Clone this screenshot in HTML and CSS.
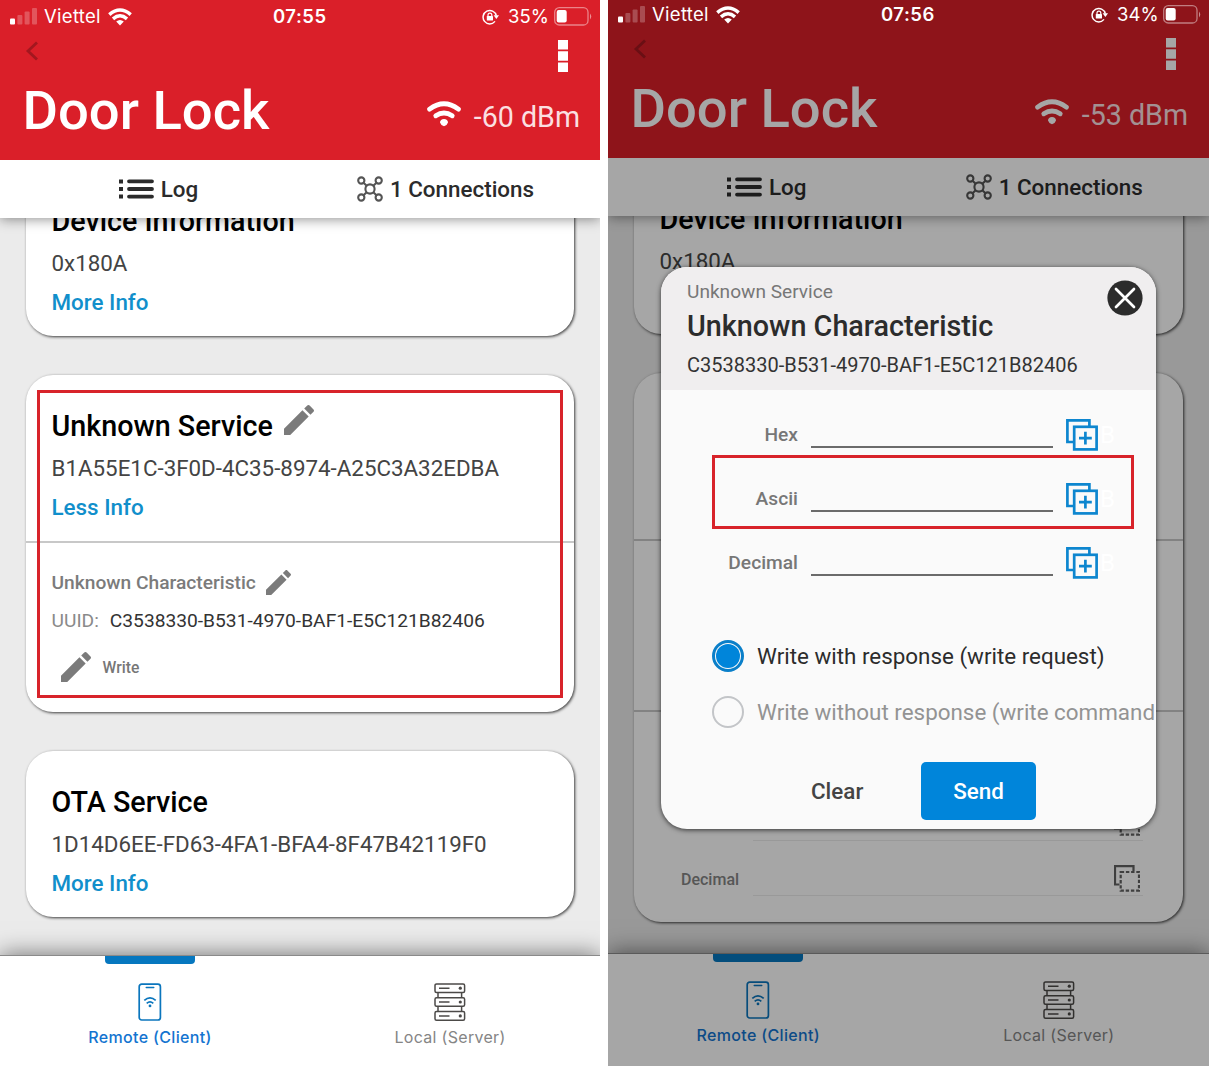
FILE: index.html
```html
<!DOCTYPE html>
<html lang="en">
<head>
<meta charset="utf-8">
<title>Door Lock</title>
<link rel="stylesheet" href="styles.css">
</head>
<body>
<svg class="sprite" aria-hidden="true">
  <symbol id="signal" viewBox="0 0 27 17">
    <rect x="0" y="10.5" width="5" height="6" rx="1" fill="#fff"/>
    <g fill="#fff" opacity=".24"><rect x="7.4" y="7" width="5" height="9.5" rx="1"/><rect x="14.6" y="3.5" width="5" height="13" rx="1"/><rect x="22" y="0" width="5" height="16.5" rx="1"/></g>
  </symbol>
  <symbol id="wifi-status" viewBox="0 0 24 18">
    <g fill="none" stroke="#fff" stroke-width="3.500"><path d="M1.300 6.600Q12-2.600 22.700 6.600"/><path d="M5 10.800Q12 4.800 19 10.800"/></g>
    <path d="M8.200 13.600Q12 10.600 15.800 13.600L12 17.600Z" fill="#fff"/>
  </symbol>
  <symbol id="wifi" viewBox="0 0 34 26">
    <g fill="none" stroke="currentColor" stroke-width="4.800" stroke-linecap="round"><path d="M2.600 8.200Q17-2.600 31.400 8.200"/><path d="M8.800 14.800Q17 9.200 25.200 14.800"/></g>
    <path d="M17 18a4 3.400 0 0 1 4 3.600Q20.500 24 17 25.300Q13.500 24 13 21.600A4 3.400 0 0 1 17 18Z" fill="currentColor"/>
  </symbol>
  <symbol id="rotation" viewBox="0 0 17 16">
    <path d="M14.300 6.600A6.700 6.700 0 1 0 13 12.400" fill="none" stroke="#fff" stroke-width="1.500"/>
    <path d="M11.600 6.200h5.400l-2.600 3.800z" fill="#fff"/>
    <rect x="4.800" y="7" width="6.200" height="4.600" rx=".6" fill="#fff"/>
    <path d="M6 7.200V6a1.900 1.900 0 0 1 3.800 0v1.200" fill="none" stroke="#fff" stroke-width="1.200"/>
  </symbol>
  <symbol id="battery" viewBox="0 0 38 19">
    <rect x=".7" y=".7" width="33.300" height="17.300" rx="4.600" fill="none" stroke="#fff" stroke-opacity=".45" stroke-width="1.300"/>
    <rect x="2.700" y="3" width="10" height="12.600" rx="2" fill="#fff"/>
    <path d="M36 6.500q2.400 3 0 6z" fill="#fff" fill-opacity=".5"/>
  </symbol>
  <symbol id="back" viewBox="0 0 14 22"><path d="M12 2.500L3 11l9 8.500" fill="none" stroke="currentColor" stroke-width="2.800"/></symbol>
  <symbol id="more" viewBox="0 0 10 32"><path d="M0 0h10v9.600H0zM0 11.300h10v9.400H0zM0 22.400h10V32H0z" fill="currentColor"/></symbol>
  <symbol id="log" viewBox="0 0 35 20">
    <path d="M0 .5h4v4H0zM0 8h4v4H0zM0 15.500h4v4H0z" fill="#2b2b2b"/>
    <path d="M10 2.300h23M10 10h23M10 17.600h23" stroke="#2b2b2b" stroke-width="3.800" stroke-linecap="round"/>
  </symbol>
  <symbol id="connections" viewBox="0 0 26 26">
    <g fill="none" stroke="#555" stroke-width="2.100"><circle cx="13" cy="13" r="4.600"/><circle cx="4.300" cy="4.500" r="3.100"/><circle cx="21.700" cy="4.500" r="3.100"/><circle cx="4.300" cy="21.500" r="3.100"/><circle cx="21.700" cy="21.500" r="3.100"/><path d="M6.500 6.700l3.200 3.100M19.500 6.700l-3.200 3.100M6.500 19.300l3.200-3.100M19.500 19.300l-3.200-3.100"/></g>
  </symbol>
  <symbol id="pencil" viewBox="3 3 18 18"><path fill="#7b7b7b" d="M3 17.250V21h3.750L17.810 9.940l-3.750-3.750L3 17.250zM20.710 7.040c.39-.39.39-1.020 0-1.410l-2.340-2.340c-.39-.39-1.020-.39-1.410 0l-1.830 1.830 3.750 3.750 1.830-1.830z"/></symbol>
  <symbol id="phone-icon" viewBox="0 0 24 38">
    <rect x="1.200" y="1.200" width="21.200" height="35.800" rx="2.500" fill="none" stroke="#0b76bd" stroke-width="1.700"/>
    <path d="M8.200 4.500h7.600" stroke="#0b76bd" stroke-width="1.400" stroke-linecap="round"/>
    <path d="M6.300 17.400Q12 12.400 17.700 17.400M8.700 20.300Q12 17.300 15.300 20.300" fill="none" stroke="#0b76bd" stroke-width="1.700"/>
    <circle cx="12" cy="22.900" r="1.400" fill="#0b76bd"/>
  </symbol>
  <symbol id="server" viewBox="0 0 32 38">
    <g fill="none" stroke="#4c4a48" stroke-width="1.500"><rect x="1" y=".9" width="29.600" height="8.600" rx="1.500"/><rect x="1" y="14.700" width="29.600" height="8.600" rx="1.500"/><rect x="1" y="28.600" width="29.600" height="8.600" rx="1.500"/><path d="M4 9.500v5.200M27.600 9.500v5.200M4 23.300v5.300M27.600 23.300v5.300M5 5.300h10.500M5 19.100h10.500M5 33h10.500"/></g>
    <g fill="#4c4a48"><circle cx="26.300" cy="5.200" r="1.600"/><circle cx="26.300" cy="19" r="1.600"/><circle cx="26.300" cy="32.900" r="1.600"/></g>
  </symbol>
  <symbol id="copy-add" viewBox="0 0 32 32">
    <g fill="none" stroke="#0d86cf" stroke-width="2.700"><path d="M7 23H1.400V1.300h22V7"/><rect x="8.200" y="7.800" width="22.400" height="22.600"/><path d="M19.400 12.700v12.800M13 19.100h12.800"/></g>
  </symbol>
  <symbol id="copy-dashed" viewBox="0 0 26 27">
    <g fill="none" stroke="#616161" stroke-width="2.200"><path d="M5.500 19.500H1V1.100h18.500V6"/><rect x="6.700" y="7" width="18.300" height="18.600" stroke-dasharray="3.400 1.800"/></g>
  </symbol>
  <symbol id="close" viewBox="0 0 36 36"><circle cx="18" cy="18" r="17.600" fill="#2c2c2c"/><path d="M9 9l18 18M27 9L9 27" stroke="#fff" stroke-width="2.700" stroke-linecap="round"/></symbol>
</svg>

<main class="board">
  <section class="phone">
    <div class="status">
      <svg class="i-signal"><use href="#signal"/></svg><span class="carrier">Viettel</span><svg class="i-wifi-status"><use href="#wifi-status"/></svg>
      <span class="clock">07:55</span>
      <span class="power"><svg class="i-rotation"><use href="#rotation"/></svg><span class="percent">35%</span><svg class="i-battery"><use href="#battery"/></svg></span>
    </div>
    <header class="header">
      <div class="nav-row"><svg class="i-back"><use href="#back"/></svg><svg class="i-more"><use href="#more"/></svg></div>
      <div class="title-row"><h1 class="device">Door Lock</h1><div class="rssi"><svg class="i-wifi"><use href="#wifi"/></svg><span>-60 dBm</span></div></div>
    </header>
    <nav class="tabs">
      <div class="tab"><svg class="i-log"><use href="#log"/></svg><span class="tab-log">Log</span></div>
      <div class="tab"><svg class="i-connections"><use href="#connections"/></svg><span class="tab-connections">1 Connections</span></div>
    </nav>
    <div class="content">
      <article class="card card-first"><div class="service">
        <h2 class="name">Device Information</h2><p class="uuid">0x180A</p><p class="link">More Info</p>
      </div></article>
      <article class="card">
        <div class="service">
          <h2 class="name name-unknown">Unknown Service<svg class="i-pencil pencil-title"><use href="#pencil"/></svg></h2>
          <p class="uuid">B1A55E1C-3F0D-4C35-8974-A25C3A32EDBA</p><p class="link">Less Info</p>
        </div>
        <div class="characteristic">
          <div class="char-name">Unknown Characteristic<svg class="i-pencil pencil-small"><use href="#pencil"/></svg></div>
          <div class="char-uuid"><span class="muted">UUID:</span><span>C3538330-B531-4970-BAF1-E5C121B82406</span></div>
          <div class="write"><svg class="i-pencil"><use href="#pencil"/></svg><span>Write</span></div>
        </div>
      </article>
      <article class="card"><div class="service">
        <h2 class="name">OTA Service</h2><p class="uuid">1D14D6EE-FD63-4FA1-BFA4-8F47B42119F0</p><p class="link">More Info</p>
      </div></article>
    </div>
    <footer class="bottom">
      <div class="dest active"><svg class="i-phone"><use href="#phone-icon"/></svg><span>Remote (Client)</span></div>
      <div class="dest"><svg class="i-server"><use href="#server"/></svg><span>Local (Server)</span></div>
    </footer>
    <div class="mark mark-service"></div>
  </section>

  <section class="phone phone-modal">
    <div class="status">
      <svg class="i-signal"><use href="#signal"/></svg><span class="carrier">Viettel</span><svg class="i-wifi-status"><use href="#wifi-status"/></svg>
      <span class="clock">07:56</span>
      <span class="power"><svg class="i-rotation"><use href="#rotation"/></svg><span class="percent">34%</span><svg class="i-battery"><use href="#battery"/></svg></span>
    </div>
    <header class="header">
      <div class="nav-row"><svg class="i-back"><use href="#back"/></svg><svg class="i-more"><use href="#more"/></svg></div>
      <div class="title-row"><h1 class="device">Door Lock</h1><div class="rssi"><svg class="i-wifi"><use href="#wifi"/></svg><span>-53 dBm</span></div></div>
    </header>
    <nav class="tabs">
      <div class="tab"><svg class="i-log"><use href="#log"/></svg><span class="tab-log">Log</span></div>
      <div class="tab"><svg class="i-connections"><use href="#connections"/></svg><span class="tab-connections">1 Connections</span></div>
    </nav>
    <div class="content">
      <article class="card card-first"><div class="service">
        <h2 class="name">Device Information</h2><p class="uuid">0x180A</p>
      </div></article>
      <article class="card">
        <div class="service"></div>
        <div class="characteristic"></div>
        <div class="values">
          <div class="value"><span class="value-label"></span><span class="value-field field-ascii"><svg class="i-dashed"><use href="#copy-dashed"/></svg></span></div>
          <div class="value"><span class="value-label">Decimal</span><span class="value-field"><svg class="i-dashed"><use href="#copy-dashed"/></svg></span></div>
        </div>
      </article>
    </div>
    <footer class="bottom">
      <div class="dest active"><svg class="i-phone"><use href="#phone-icon"/></svg><span>Remote (Client)</span></div>
      <div class="dest"><svg class="i-server"><use href="#server"/></svg><span>Local (Server)</span></div>
    </footer>
    <div class="scrim"></div>
    <div class="dialog">
      <div class="dialog-head">
        <p class="dialog-service">Unknown Service</p>
        <h2 class="dialog-title">Unknown Characteristic</h2>
        <p class="dialog-uuid">C3538330-B531-4970-BAF1-E5C121B82406</p>
        <svg class="i-close"><use href="#close"/></svg>
      </div>
      <div class="fields">
        <div class="field"><label>Hex</label><span class="line"></span><svg class="i-copy"><use href="#copy-add"/></svg><span class="ghost">B</span></div>
        <div class="field"><label>Ascii</label><span class="line"></span><svg class="i-copy"><use href="#copy-add"/></svg><span class="ghost">B</span></div>
        <div class="field"><label>Decimal</label><span class="line"></span><svg class="i-copy"><use href="#copy-add"/></svg><span class="ghost">B</span></div>
      </div>
      <div class="options">
        <div class="option"><span class="radio checked"></span><span>Write with response (write request)</span></div>
        <div class="option off"><span class="radio"></span><span>Write without response (write command</span></div>
      </div>
      <div class="actions"><span class="clear">Clear</span><span class="send">Send</span></div>
    </div>
    <div class="mark mark-ascii"></div>
  </section>
</main>
</body>
</html>
```

FILE: styles.css
```css
* { box-sizing: border-box; margin: 0; padding: 0; }
body { width: 1215px; height: 1071px; overflow: hidden; background: #fff; font-family: Roboto, "Liberation Sans", sans-serif; white-space: nowrap; }
svg { display: block; flex: none; }
.sprite { position: absolute; width: 0; height: 0; }
h1, h2 { font-weight: 500; }

.board { display: flex; gap: 8px; height: 1071px; overflow: hidden; }
.phone { position: relative; flex: none; width: 600px; height: 1066px; display: flex; flex-direction: column; background: #fff; overflow: hidden; }
.phone-modal { width: 601px; height: 1068px; margin-top: -2px; }

.status { position: relative; z-index: 3; flex: none; height: 33px; margin-bottom: -33px; padding: 0 8px 0 10px; display: flex; align-items: center; color: #fff; font-family: Inter, "Liberation Sans", sans-serif; font-size: 18.500px; line-height: 33px; }
.i-signal { width: 27px; height: 17px; margin: -1px 7px 0 0; }
.carrier { width: 58px; letter-spacing: .3px; }
.i-wifi-status { width: 24px; height: 18px; margin-left: 6px; }
.clock { margin-left: 141px; font-weight: 600; letter-spacing: .5px; }
.power { margin-left: auto; display: flex; align-items: center; }
.i-rotation { width: 17px; height: 16px; margin-right: 9px; }
.percent { width: 41px; margin-right: 5px; }
.i-battery { width: 38px; height: 19px; margin-top: -1px; }

.header { position: relative; z-index: 2; flex: none; height: 160px; background: #da1f29; color: #fff; padding: 40px 20px 0 24px; }
.phone-modal .header { padding-right: 21px; }
.nav-row { display: flex; justify-content: space-between; height: 34px; }
.i-back { width: 14px; height: 22px; margin-left: 1px; color: #a3171f; }
.i-more { width: 10px; height: 32px; margin-right: 12px; }
.title-row { display: flex; justify-content: space-between; height: 74px; align-items: center; }
.device { font-size: 54.400px; line-height: 74px; margin-left: -1.500px; }
.rssi { display: flex; align-items: center; gap: 13px; font-size: 28.600px; color: #fbdfe1; padding-top: 11px; }
.i-wifi { width: 34px; height: 26px; color: #fff; margin-top: -6px; }

.tabs { position: relative; z-index: 1; flex: none; height: 58px; background: #fff; display: grid; grid-template-columns: 1fr 1fr; box-shadow: 0 1px 12px rgba(0,0,0,.45); color: #2b2b2b; font-size: 22.400px; font-weight: 500; }
.tab { display: flex; align-items: center; justify-content: center; gap: 7px; padding-left: 17px; }
.tab + .tab { padding-left: 0; padding-right: 9px; }
.i-log { width: 35px; height: 20px; }
.i-connections { width: 26px; height: 26px; }

.content { flex: none; height: 737px; padding: 0 26px; background: #ebebeb; overflow: hidden; display: flex; flex-direction: column; gap: 39px; }
.card { flex: none; background: #fff; border-radius: 27px; box-shadow: 1px 1px 3px rgba(0,0,0,.75); }
.card-first { margin-top: -48px; }
.service { height: 166px; padding: 33px 25.500px 0; }
.name { display: flex; align-items: center; height: 36px; font-size: 28.700px; color: #000; }
.uuid { margin-top: 9px; height: 30px; line-height: 30px; font-size: 22.350px; color: #444; }
.link { margin-top: 9px; height: 30px; line-height: 30px; font-size: 22.400px; font-weight: 500; color: #118fcb; }
.i-pencil { width: 30px; height: 30px; }
.pencil-title { margin: -12px 0 0 11px; }
.characteristic { border-top: 2px solid #c8c8c8; height: 171px; padding: 24px 25.500px 0; }
.char-name { display: flex; align-items: center; height: 30px; font-size: 19.200px; font-weight: 500; color: #7b7b7b; }
.pencil-small { width: 25px; height: 25px; margin-left: 10px; }
.char-uuid { margin-top: 8px; height: 30px; display: flex; align-items: center; gap: 11px; font-size: 19.200px; color: #333; }
.muted { color: #8a8a8a; }
.write { margin-top: 17px; padding-left: 9px; height: 30px; display: flex; align-items: center; gap: 12px; font-size: 15.700px; font-weight: 500; color: #777; }
.values { height: 212px; border-top: 2px solid #c8c8c8; padding: 74px 40px 0 47px; }
.value { height: 55px; display: flex; }
.value-label { width: 72px; line-height: 77px; font-size: 16px; font-weight: 500; color: #858585; }
.value-field { flex: 1; border-bottom: 1px solid #ebebeb; display: flex; justify-content: flex-end; align-items: flex-end; padding: 0 3px 3px 0; }
.field-ascii { padding-bottom: 4px; }
.i-dashed { width: 26px; height: 27px; }

.bottom { position: relative; z-index: 1; flex: none; height: 113px; background: #fff; border-top: 1px solid #8a8a8a; box-shadow: 0 -1px 22px rgba(0,0,0,.5); display: grid; grid-template-columns: 1fr 1fr; font-family: Inter, "Liberation Sans", sans-serif; font-size: 16px; letter-spacing: .3px; color: #858585; }
.dest { display: flex; flex-direction: column; align-items: center; padding-top: 27px; }
.dest span { line-height: 20px; margin-top: 5.500px; }
.active { color: #1374d0; padding-top: 0; font-weight: 500; letter-spacing: .33px; }
.active::before { content: ""; width: 90px; height: 8px; margin-bottom: 19px; border-radius: 0 0 4px 4px; background: #0677bf; }
.i-phone { width: 24px; height: 38px; }
.i-server { width: 32px; height: 38px; }

.mark { position: absolute; z-index: 4; border: 3px solid #d8232a; }
.mark-service { left: 37px; top: 390px; width: 526px; height: 308px; }
.mark-ascii { left: 104px; top: 457px; width: 422px; height: 74px; }
.scrim { position: absolute; z-index: 2; inset: 0; background: rgba(0,0,0,.35); }

.dialog { position: absolute; z-index: 3; left: 53px; top: 269px; width: 495px; height: 562px; border-radius: 26px; background: #fafafa; overflow: hidden; box-shadow: 0 1px 5px rgba(0,0,0,.7); }
.dialog-head { position: relative; height: 123px; background: #f0eeef; padding: 11px 26px 0; }
.dialog-service { height: 28px; line-height: 28px; font-size: 19.100px; color: #777; }
.dialog-title { height: 36px; line-height: 36px; margin-top: 2px; font-size: 28.750px; color: #2c2c2c; }
.dialog-uuid { height: 28px; line-height: 28px; margin-top: 7px; font-size: 20px; color: #333; }
.i-close { position: absolute; right: 13px; top: 13px; width: 36px; height: 36px; }
.fields { padding-top: 13px; }
.field { height: 64px; display: flex; align-items: center; font-size: 19.200px; font-weight: 500; color: #777; }
.field label { width: 137px; text-align: right; padding-bottom: 2px; }
.line { width: 242px; height: 2px; margin: 23px 13px 0 13px; background: #6b6b6b; }
.i-copy { width: 32px; height: 32px; }
.ghost { margin-left: 2px; font-size: 24px; font-weight: 400; color: #fff; }
.options { margin-top: 33px; padding-left: 51px; }
.option { height: 56px; display: flex; align-items: center; gap: 13px; font-size: 22.400px; color: #2c2c2c; }
.off { color: #939393; }
.radio { flex: none; width: 32px; height: 32px; border: 2px solid #c3c5c8; border-radius: 50%; }
.checked { border: 3px solid #0a7fc9; padding: 1px; background: #0085da content-box; }
.actions { margin-top: 22px; display: flex; align-items: center; padding-left: 150px; font-size: 22.400px; font-weight: 500; }
.clear { width: 110px; color: #444; }
.send { width: 115px; height: 58px; line-height: 59px; border-radius: 5px; background: #0085da; color: #fff; text-align: center; }
```
